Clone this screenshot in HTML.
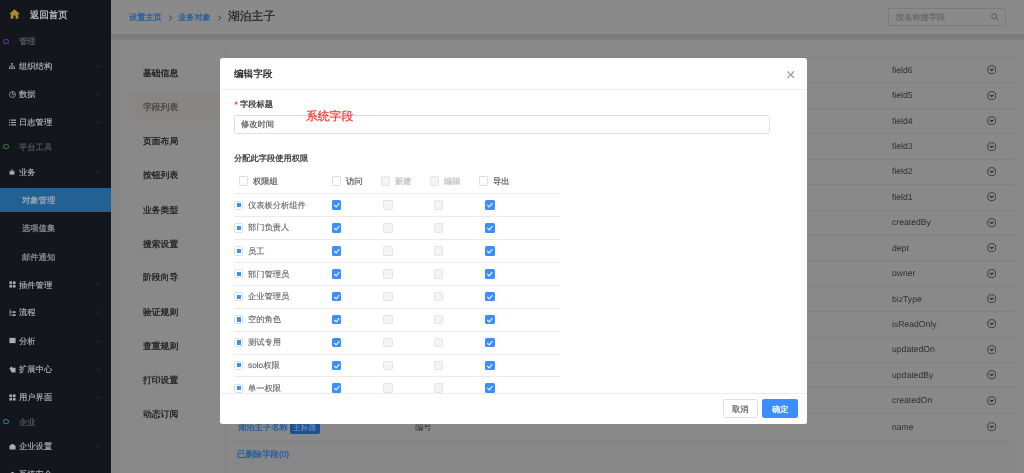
<!DOCTYPE html><html><head><meta charset="utf-8"><style>
*{box-sizing:border-box;margin:0;padding:0}
html,body{width:1024px;height:473px;overflow:hidden}
body{position:relative;background:#868686;font-family:"Liberation Sans", sans-serif;text-rendering:geometricPrecision}
svg{display:block}
.ab{position:absolute}
.t{position:absolute;white-space:nowrap;line-height:1;will-change:transform}
.m{-webkit-text-stroke:0.25px currentColor}
.m2{-webkit-text-stroke:0.3px currentColor}
</style></head><body>

<div class="ab" style="left:0.00px;top:0.00px;width:111.00px;height:473.00px;background:#13161d"></div>
<svg class="ab" style="left:9.3px;top:9.3px" width="11" height="10" viewBox="0 0 11 10"><path d="M5.5 0.3 L10.8 5 L9.3 5 L9.3 9.8 L6.6 9.8 L6.6 6.6 L4.4 6.6 L4.4 9.8 L1.7 9.8 L1.7 5 L0.2 5 Z" fill="#a98b2c"/></svg>
<div class="t" style="left:29.72px;top:10.19px;font-size:9.4px;color:#bfc1c4;font-weight:400;-webkit-text-stroke:0.28px #bfc1c4">返回首页</div>
<div class="ab" style="left:3.2px;top:38.6px;width:5.6px;height:5.4px;border:1.1px solid #67309a;border-radius:50%"></div>
<div class="t" style="left:18.75px;top:37.32px;font-size:8.3px;color:#50545b;font-weight:400;-webkit-text-stroke:0.3px #50545b">管理</div>
<div class="ab" style="left:3.2px;top:144.1px;width:5.6px;height:5.4px;border:1.1px solid #2a7a2a;border-radius:50%"></div>
<div class="t" style="left:18.75px;top:142.82px;font-size:8.3px;color:#50545b;font-weight:400;-webkit-text-stroke:0.3px #50545b">平台工具</div>
<div class="ab" style="left:3.2px;top:418.9px;width:5.6px;height:5.4px;border:1.1px solid #1a7f92;border-radius:50%"></div>
<div class="t" style="left:18.75px;top:417.62px;font-size:8.3px;color:#50545b;font-weight:400;-webkit-text-stroke:0.3px #50545b">企业</div>
<div class="ab" style="left:9.3px;top:63.1px;width:6.2px;height:6.2px"><svg width="6.2" height="6.2" viewBox="0 0 8 8"><rect x="3" y="0" width="2" height="2" fill="#a9acb1"/><path d="M4 2 V4 M1 4 H7 M1 4 V6 M4 4 V6 M7 4 V6" stroke="#a9acb1" stroke-width="0.8" fill="none"/><rect x="0" y="5.8" width="2" height="2" fill="#a9acb1"/><rect x="3" y="5.8" width="2" height="2" fill="#a9acb1"/><rect x="6" y="5.8" width="2" height="2" fill="#a9acb1"/></svg></div>
<div class="t" style="left:19.05px;top:61.92px;font-size:8.3px;color:#aeb1b6;font-weight:400;-webkit-text-stroke:0.15px #aeb1b6">组织结构</div>
<svg class="ab" style="left:96px;top:64.7px" width="5" height="3" viewBox="0 0 5 3"><path d="M0.3 0.3 L2.5 2.5 L4.7 0.3" stroke="#30343b" stroke-width="0.8" fill="none"/></svg>
<div class="ab" style="left:8.9px;top:90.7px;width:7.0px;height:7.0px"><svg width="7.0" height="7.0" viewBox="0 0 8 8"><circle cx="4" cy="4" r="3.4" stroke="#a9acb1" stroke-width="0.9" fill="none"/><path d="M4 1.5 V4 H6.3" stroke="#a9acb1" stroke-width="0.9" fill="none"/></svg></div>
<div class="t" style="left:19.05px;top:90.22px;font-size:8.3px;color:#aeb1b6;font-weight:400;-webkit-text-stroke:0.15px #aeb1b6">数据</div>
<svg class="ab" style="left:96px;top:93.0px" width="5" height="3" viewBox="0 0 5 3"><path d="M0.3 0.3 L2.5 2.5 L4.7 0.3" stroke="#30343b" stroke-width="0.8" fill="none"/></svg>
<div class="ab" style="left:8.9px;top:118.5px;width:7.0px;height:7.0px"><svg width="7.0" height="7.0" viewBox="0 0 8 8"><path d="M0 1.3 H1.3 M2.3 1.3 H8 M0 4 H1.3 M2.3 4 H8 M0 6.7 H1.3 M2.3 6.7 H8" stroke="#a9acb1" stroke-width="1.2"/></svg></div>
<div class="t" style="left:19.05px;top:118.02px;font-size:8.3px;color:#aeb1b6;font-weight:400;-webkit-text-stroke:0.15px #aeb1b6">日志管理</div>
<svg class="ab" style="left:96px;top:120.8px" width="5" height="3" viewBox="0 0 5 3"><path d="M0.3 0.3 L2.5 2.5 L4.7 0.3" stroke="#30343b" stroke-width="0.8" fill="none"/></svg>
<div class="ab" style="left:9.3px;top:169.3px;width:6.0px;height:6.0px"><svg width="6.0" height="6.0" viewBox="0 0 8 8"><path d="M0.8 2.8 H7.2 V7.5 H0.8 Z" fill="#a9acb1"/><path d="M2.8 2.8 V1.2 H5.2 V2.8" stroke="#a9acb1" stroke-width="0.9" fill="none"/></svg></div>
<div class="t" style="left:19.05px;top:168.02px;font-size:8.3px;color:#aeb1b6;font-weight:400;-webkit-text-stroke:0.15px #aeb1b6">业务</div>
<svg class="ab" style="left:96px;top:170.4px" width="5" height="3" viewBox="0 0 5 3"><path d="M0.3 2.7 L2.5 0.5 L4.7 2.7" stroke="#30343b" stroke-width="0.8" fill="none"/></svg>
<div class="ab" style="left:0.00px;top:188.00px;width:111.00px;height:23.70px;background:#236193"></div>
<div class="t" style="left:22.15px;top:195.72px;font-size:8.3px;color:#9ea6ae;font-weight:700;">对象管理</div>
<div class="t m" style="left:22.15px;top:223.82px;font-size:8.3px;color:#8a8e93;font-weight:400;">选项值集</div>
<div class="t m" style="left:22.15px;top:252.52px;font-size:8.3px;color:#8a8e93;font-weight:400;">邮件通知</div>
<div class="ab" style="left:8.9px;top:281.0px;width:7.0px;height:7.0px"><svg width="7.0" height="7.0" viewBox="0 0 8 8"><rect x="0.5" y="0.5" width="3" height="3" fill="#a9acb1"/><rect x="4.5" y="0.5" width="3" height="3" fill="#a9acb1"/><rect x="0.5" y="4.5" width="3" height="3" fill="#a9acb1"/><rect x="4.5" y="4.5" width="3" height="3" fill="#a9acb1"/></svg></div>
<div class="t" style="left:19.05px;top:280.52px;font-size:8.3px;color:#aeb1b6;font-weight:400;-webkit-text-stroke:0.15px #aeb1b6">插件管理</div>
<svg class="ab" style="left:96px;top:283.3px" width="5" height="3" viewBox="0 0 5 3"><path d="M0.3 0.3 L2.5 2.5 L4.7 0.3" stroke="#30343b" stroke-width="0.8" fill="none"/></svg>
<div class="ab" style="left:8.9px;top:308.9px;width:7.0px;height:7.0px"><svg width="7.0" height="7.0" viewBox="0 0 8 8"><path d="M1.2 0.5 V7 H3.5 M1.2 3.5 H3.5" stroke="#a9acb1" stroke-width="0.9" fill="none"/><rect x="4" y="2.5" width="3.5" height="2" fill="#a9acb1"/><rect x="4" y="6" width="3.5" height="2" fill="#a9acb1"/></svg></div>
<div class="t" style="left:19.05px;top:308.42px;font-size:8.3px;color:#aeb1b6;font-weight:400;-webkit-text-stroke:0.15px #aeb1b6">流程</div>
<svg class="ab" style="left:96px;top:311.2px" width="5" height="3" viewBox="0 0 5 3"><path d="M0.3 0.3 L2.5 2.5 L4.7 0.3" stroke="#30343b" stroke-width="0.8" fill="none"/></svg>
<div class="ab" style="left:8.9px;top:337.2px;width:7.0px;height:7.0px"><svg width="7.0" height="7.0" viewBox="0 0 8 8"><rect x="0.5" y="1" width="7" height="6" fill="#a9acb1"/></svg></div>
<div class="t" style="left:19.05px;top:336.72px;font-size:8.3px;color:#aeb1b6;font-weight:400;-webkit-text-stroke:0.15px #aeb1b6">分析</div>
<svg class="ab" style="left:96px;top:339.5px" width="5" height="3" viewBox="0 0 5 3"><path d="M0.3 0.3 L2.5 2.5 L4.7 0.3" stroke="#30343b" stroke-width="0.8" fill="none"/></svg>
<div class="ab" style="left:8.9px;top:365.5px;width:7.0px;height:7.0px"><svg width="7.0" height="7.0" viewBox="0 0 8 8"><path d="M0.5 2.5 L3 0.5 L4 2 L7.5 2 L7.5 7.5 L3 7.5 Z" fill="#a9acb1"/></svg></div>
<div class="t" style="left:19.05px;top:365.02px;font-size:8.3px;color:#aeb1b6;font-weight:400;-webkit-text-stroke:0.15px #aeb1b6">扩展中心</div>
<svg class="ab" style="left:96px;top:367.8px" width="5" height="3" viewBox="0 0 5 3"><path d="M0.3 0.3 L2.5 2.5 L4.7 0.3" stroke="#30343b" stroke-width="0.8" fill="none"/></svg>
<div class="ab" style="left:8.9px;top:393.5px;width:7.0px;height:7.0px"><svg width="7.0" height="7.0" viewBox="0 0 8 8"><rect x="0.5" y="0.5" width="3" height="3" fill="#a9acb1"/><rect x="4.5" y="0.5" width="3" height="3" fill="#a9acb1"/><rect x="0.5" y="4.5" width="3" height="3" fill="#a9acb1"/><rect x="4.5" y="4.5" width="3" height="3" fill="#a9acb1"/></svg></div>
<div class="t" style="left:19.05px;top:393.02px;font-size:8.3px;color:#aeb1b6;font-weight:400;-webkit-text-stroke:0.15px #aeb1b6">用户界面</div>
<svg class="ab" style="left:96px;top:395.8px" width="5" height="3" viewBox="0 0 5 3"><path d="M0.3 0.3 L2.5 2.5 L4.7 0.3" stroke="#30343b" stroke-width="0.8" fill="none"/></svg>
<div class="ab" style="left:8.9px;top:442.7px;width:7.0px;height:7.0px"><svg width="7.0" height="7.0" viewBox="0 0 8 8"><path d="M0.5 7.5 V3 L4 0.8 L7.5 3 V7.5 Z" fill="#a9acb1"/></svg></div>
<div class="t" style="left:19.05px;top:442.22px;font-size:8.3px;color:#aeb1b6;font-weight:400;-webkit-text-stroke:0.15px #aeb1b6">企业设置</div>
<svg class="ab" style="left:96px;top:445.0px" width="5" height="3" viewBox="0 0 5 3"><path d="M0.3 0.3 L2.5 2.5 L4.7 0.3" stroke="#30343b" stroke-width="0.8" fill="none"/></svg>
<div class="ab" style="left:8.9px;top:470.5px;width:7.0px;height:7.0px"><svg width="7.0" height="7.0" viewBox="0 0 8 8"><path d="M0.5 7.5 V3 L4 0.8 L7.5 3 V7.5 Z" fill="#a9acb1"/></svg></div>
<div class="t" style="left:19.05px;top:470.02px;font-size:8.3px;color:#aeb1b6;font-weight:400;-webkit-text-stroke:0.15px #aeb1b6">系统安全</div>
<svg class="ab" style="left:96px;top:472.8px" width="5" height="3" viewBox="0 0 5 3"><path d="M0.3 0.3 L2.5 2.5 L4.7 0.3" stroke="#30343b" stroke-width="0.8" fill="none"/></svg>
<div class="ab" style="left:111.00px;top:0.00px;width:913.00px;height:34.40px;background:#8a8a8a"></div>
<div class="ab" style="left:111.00px;top:34.40px;width:913.00px;height:5.60px;background:linear-gradient(#797979,#808080)"></div>
<div class="t m" style="left:129.15px;top:14.26px;font-size:8.2px;color:#1f5c9c;font-weight:400;">设置主页</div>
<svg class="ab" style="left:167.8px;top:14.6px" width="5" height="6.2" viewBox="0 0 5 6.2"><path d="M0.8 0.4 L3.9 3.1 L0.8 5.8" stroke="#404040" stroke-width="0.9" fill="none"/></svg>
<div class="t m" style="left:178.25px;top:14.26px;font-size:8.2px;color:#1f5c9c;font-weight:400;">业务对象</div>
<svg class="ab" style="left:217.1px;top:14.6px" width="5" height="6.2" viewBox="0 0 5 6.2"><path d="M0.8 0.4 L3.9 3.1 L0.8 5.8" stroke="#404040" stroke-width="0.9" fill="none"/></svg>
<div class="t m" style="left:227.65px;top:10.54px;font-size:11.8px;color:#262626;font-weight:400;">湖泊主子</div>
<div class="ab" style="left:888.30px;top:8.30px;width:117.50px;height:17.30px;border:0.8px solid #7b7b7b;border-radius:2px"></div>
<div class="t m" style="left:895.65px;top:14.16px;font-size:8.2px;color:#6a6a6a;font-weight:400;">按名称搜字段</div>
<svg class="ab" style="left:990.8px;top:13.4px" width="8" height="8" viewBox="0 0 8 8"><circle cx="3.2" cy="3.2" r="2.5" stroke="#555555" stroke-width="0.9" fill="none"/><path d="M5.1 5.1 L7.4 7.4" stroke="#555555" stroke-width="1"/></svg>
<div class="ab" style="left:120.50px;top:40.00px;width:903.50px;height:433.00px;background:#898989"></div>
<div class="ab" style="left:128.60px;top:92.00px;width:97.00px;height:28.10px;background:#898583"></div>
<div class="ab" style="left:225.40px;top:49.80px;width:0.80px;height:423.20px;background:#828282"></div>
<div class="t" style="left:143.24px;top:69.48px;font-size:8.8px;color:#1a1a1a;font-weight:700;">基础信息</div>
<div class="t m" style="left:143.24px;top:102.63px;font-size:8.8px;color:#444444;font-weight:400;">字段列表</div>
<div class="t m" style="left:143.24px;top:136.78px;font-size:8.8px;color:#1a1a1a;font-weight:400;-webkit-text-stroke:0.25px #1a1a1a">页面布局</div>
<div class="t m" style="left:143.24px;top:170.93px;font-size:8.8px;color:#1a1a1a;font-weight:400;-webkit-text-stroke:0.25px #1a1a1a">按钮列表</div>
<div class="t m" style="left:143.24px;top:206.08px;font-size:8.8px;color:#1a1a1a;font-weight:400;-webkit-text-stroke:0.25px #1a1a1a">业务类型</div>
<div class="t m" style="left:143.24px;top:240.23px;font-size:8.8px;color:#1a1a1a;font-weight:400;-webkit-text-stroke:0.25px #1a1a1a">搜索设置</div>
<div class="t m" style="left:143.24px;top:273.38px;font-size:8.8px;color:#1a1a1a;font-weight:400;-webkit-text-stroke:0.25px #1a1a1a">阶段向导</div>
<div class="t m" style="left:143.24px;top:307.53px;font-size:8.8px;color:#1a1a1a;font-weight:400;-webkit-text-stroke:0.25px #1a1a1a">验证规则</div>
<div class="t m" style="left:143.24px;top:341.68px;font-size:8.8px;color:#1a1a1a;font-weight:400;-webkit-text-stroke:0.25px #1a1a1a">查重规则</div>
<div class="t m" style="left:143.24px;top:375.83px;font-size:8.8px;color:#1a1a1a;font-weight:400;-webkit-text-stroke:0.25px #1a1a1a">打印设置</div>
<div class="t m" style="left:143.24px;top:409.98px;font-size:8.8px;color:#1a1a1a;font-weight:400;-webkit-text-stroke:0.25px #1a1a1a">动态订阅</div>
<div class="ab" style="left:232.00px;top:57.00px;width:783.00px;height:0.80px;background:#818181"></div>
<div class="ab" style="left:232.00px;top:82.42px;width:783.00px;height:0.80px;background:#818181"></div>
<div class="ab" style="left:232.00px;top:107.84px;width:783.00px;height:0.80px;background:#818181"></div>
<div class="ab" style="left:232.00px;top:133.26px;width:783.00px;height:0.80px;background:#818181"></div>
<div class="ab" style="left:232.00px;top:158.68px;width:783.00px;height:0.80px;background:#818181"></div>
<div class="ab" style="left:232.00px;top:184.10px;width:783.00px;height:0.80px;background:#818181"></div>
<div class="ab" style="left:232.00px;top:209.52px;width:783.00px;height:0.80px;background:#818181"></div>
<div class="ab" style="left:232.00px;top:234.94px;width:783.00px;height:0.80px;background:#818181"></div>
<div class="ab" style="left:232.00px;top:260.36px;width:783.00px;height:0.80px;background:#818181"></div>
<div class="ab" style="left:232.00px;top:285.78px;width:783.00px;height:0.80px;background:#818181"></div>
<div class="ab" style="left:232.00px;top:311.20px;width:783.00px;height:0.80px;background:#818181"></div>
<div class="ab" style="left:232.00px;top:336.62px;width:783.00px;height:0.80px;background:#818181"></div>
<div class="ab" style="left:232.00px;top:362.04px;width:783.00px;height:0.80px;background:#818181"></div>
<div class="ab" style="left:232.00px;top:387.46px;width:783.00px;height:0.80px;background:#818181"></div>
<div class="ab" style="left:232.00px;top:412.88px;width:783.00px;height:0.80px;background:#818181"></div>
<div class="ab" style="left:232.00px;top:440.00px;width:783.00px;height:0.80px;background:#818181"></div>
<div class="t" style="left:891.54px;top:65.75px;font-size:8.65px;color:#303030;font-weight:400;">field6</div>
<svg class="ab" style="left:986.8px;top:65.2px" width="9.4" height="9.4" viewBox="0 0 10 10"><circle cx="5" cy="5" r="4.3" stroke="#3a3a3a" stroke-width="1.05" fill="none"/><path d="M3.1 4.0 L5 5.9 L6.9 4.0" stroke="#3a3a3a" stroke-width="1.35" fill="none"/></svg>
<div class="t" style="left:891.54px;top:91.17px;font-size:8.65px;color:#303030;font-weight:400;">field5</div>
<svg class="ab" style="left:986.8px;top:90.6px" width="9.4" height="9.4" viewBox="0 0 10 10"><circle cx="5" cy="5" r="4.3" stroke="#3a3a3a" stroke-width="1.05" fill="none"/><path d="M3.1 4.0 L5 5.9 L6.9 4.0" stroke="#3a3a3a" stroke-width="1.35" fill="none"/></svg>
<div class="t" style="left:891.54px;top:116.59px;font-size:8.65px;color:#303030;font-weight:400;">field4</div>
<svg class="ab" style="left:986.8px;top:116.0px" width="9.4" height="9.4" viewBox="0 0 10 10"><circle cx="5" cy="5" r="4.3" stroke="#3a3a3a" stroke-width="1.05" fill="none"/><path d="M3.1 4.0 L5 5.9 L6.9 4.0" stroke="#3a3a3a" stroke-width="1.35" fill="none"/></svg>
<div class="t" style="left:891.54px;top:142.01px;font-size:8.65px;color:#303030;font-weight:400;">field3</div>
<svg class="ab" style="left:986.8px;top:141.5px" width="9.4" height="9.4" viewBox="0 0 10 10"><circle cx="5" cy="5" r="4.3" stroke="#3a3a3a" stroke-width="1.05" fill="none"/><path d="M3.1 4.0 L5 5.9 L6.9 4.0" stroke="#3a3a3a" stroke-width="1.35" fill="none"/></svg>
<div class="t" style="left:891.54px;top:167.43px;font-size:8.65px;color:#303030;font-weight:400;">field2</div>
<svg class="ab" style="left:986.8px;top:166.9px" width="9.4" height="9.4" viewBox="0 0 10 10"><circle cx="5" cy="5" r="4.3" stroke="#3a3a3a" stroke-width="1.05" fill="none"/><path d="M3.1 4.0 L5 5.9 L6.9 4.0" stroke="#3a3a3a" stroke-width="1.35" fill="none"/></svg>
<div class="t" style="left:891.54px;top:192.85px;font-size:8.65px;color:#303030;font-weight:400;">field1</div>
<svg class="ab" style="left:986.8px;top:192.3px" width="9.4" height="9.4" viewBox="0 0 10 10"><circle cx="5" cy="5" r="4.3" stroke="#3a3a3a" stroke-width="1.05" fill="none"/><path d="M3.1 4.0 L5 5.9 L6.9 4.0" stroke="#3a3a3a" stroke-width="1.35" fill="none"/></svg>
<div class="t" style="left:891.54px;top:218.27px;font-size:8.65px;color:#303030;font-weight:400;">createdBy</div>
<svg class="ab" style="left:986.8px;top:217.7px" width="9.4" height="9.4" viewBox="0 0 10 10"><circle cx="5" cy="5" r="4.3" stroke="#3a3a3a" stroke-width="1.05" fill="none"/><path d="M3.1 4.0 L5 5.9 L6.9 4.0" stroke="#3a3a3a" stroke-width="1.35" fill="none"/></svg>
<div class="t" style="left:891.54px;top:243.69px;font-size:8.65px;color:#303030;font-weight:400;">dept</div>
<svg class="ab" style="left:986.8px;top:243.1px" width="9.4" height="9.4" viewBox="0 0 10 10"><circle cx="5" cy="5" r="4.3" stroke="#3a3a3a" stroke-width="1.05" fill="none"/><path d="M3.1 4.0 L5 5.9 L6.9 4.0" stroke="#3a3a3a" stroke-width="1.35" fill="none"/></svg>
<div class="t" style="left:891.54px;top:269.11px;font-size:8.65px;color:#303030;font-weight:400;">owner</div>
<svg class="ab" style="left:986.8px;top:268.6px" width="9.4" height="9.4" viewBox="0 0 10 10"><circle cx="5" cy="5" r="4.3" stroke="#3a3a3a" stroke-width="1.05" fill="none"/><path d="M3.1 4.0 L5 5.9 L6.9 4.0" stroke="#3a3a3a" stroke-width="1.35" fill="none"/></svg>
<div class="t" style="left:891.54px;top:294.53px;font-size:8.65px;color:#303030;font-weight:400;">bizType</div>
<svg class="ab" style="left:986.8px;top:294.0px" width="9.4" height="9.4" viewBox="0 0 10 10"><circle cx="5" cy="5" r="4.3" stroke="#3a3a3a" stroke-width="1.05" fill="none"/><path d="M3.1 4.0 L5 5.9 L6.9 4.0" stroke="#3a3a3a" stroke-width="1.35" fill="none"/></svg>
<div class="t" style="left:891.54px;top:319.95px;font-size:8.65px;color:#303030;font-weight:400;">isReadOnly</div>
<svg class="ab" style="left:986.8px;top:319.4px" width="9.4" height="9.4" viewBox="0 0 10 10"><circle cx="5" cy="5" r="4.3" stroke="#3a3a3a" stroke-width="1.05" fill="none"/><path d="M3.1 4.0 L5 5.9 L6.9 4.0" stroke="#3a3a3a" stroke-width="1.35" fill="none"/></svg>
<div class="t" style="left:891.54px;top:345.37px;font-size:8.65px;color:#303030;font-weight:400;">updatedOn</div>
<svg class="ab" style="left:986.8px;top:344.8px" width="9.4" height="9.4" viewBox="0 0 10 10"><circle cx="5" cy="5" r="4.3" stroke="#3a3a3a" stroke-width="1.05" fill="none"/><path d="M3.1 4.0 L5 5.9 L6.9 4.0" stroke="#3a3a3a" stroke-width="1.35" fill="none"/></svg>
<div class="t" style="left:891.54px;top:370.79px;font-size:8.65px;color:#303030;font-weight:400;">updatedBy</div>
<svg class="ab" style="left:986.8px;top:370.2px" width="9.4" height="9.4" viewBox="0 0 10 10"><circle cx="5" cy="5" r="4.3" stroke="#3a3a3a" stroke-width="1.05" fill="none"/><path d="M3.1 4.0 L5 5.9 L6.9 4.0" stroke="#3a3a3a" stroke-width="1.35" fill="none"/></svg>
<div class="t" style="left:891.54px;top:396.21px;font-size:8.65px;color:#303030;font-weight:400;">createdOn</div>
<svg class="ab" style="left:986.8px;top:395.7px" width="9.4" height="9.4" viewBox="0 0 10 10"><circle cx="5" cy="5" r="4.3" stroke="#3a3a3a" stroke-width="1.05" fill="none"/><path d="M3.1 4.0 L5 5.9 L6.9 4.0" stroke="#3a3a3a" stroke-width="1.35" fill="none"/></svg>
<div class="t" style="left:891.54px;top:422.75px;font-size:8.65px;color:#303030;font-weight:400;">name</div>
<svg class="ab" style="left:986.8px;top:422.2px" width="9.4" height="9.4" viewBox="0 0 10 10"><circle cx="5" cy="5" r="4.3" stroke="#3a3a3a" stroke-width="1.05" fill="none"/><path d="M3.1 4.0 L5 5.9 L6.9 4.0" stroke="#3a3a3a" stroke-width="1.35" fill="none"/></svg>
<div class="t m" style="left:238.45px;top:422.62px;font-size:8.3px;color:#1f5c9c;font-weight:400;">湖泊主子名称</div>
<div class="ab" style="left:289.70px;top:422.20px;width:30.30px;height:11.60px;background:#1d5193;border-radius:2px"></div>
<div class="t" style="left:292.97px;top:423.66px;font-size:7.8px;color:#7d9bc6;font-weight:400;">主标题</div>
<div class="t" style="left:414.75px;top:423.32px;font-size:8.3px;color:#2e2e2e;font-weight:400;">编号</div>
<div class="ab" style="left:232.80px;top:440.60px;width:782.20px;height:27.40px;background:#878787"></div>
<div class="t m" style="left:236.95px;top:450.17px;font-size:8.4px;color:#1f5c9c;font-weight:400;">已删除字段(0)</div>
<div class="ab" style="left:220.3px;top:58.0px;width:587.2px;height:365.8px;background:#fff;border-radius:2.5px;overflow:hidden">
<div class="t" style="left:13.41px;top:11.79px;font-size:9.6px;color:#303133;font-weight:700;">编辑字段</div>
<svg class="ab" style="left:567.1px;top:12.6px" width="7.4" height="7.4" viewBox="0 0 8 8"><path d="M0.4 0.4 L7.6 7.6 M7.6 0.4 L0.4 7.6" stroke="#85888d" stroke-width="1.1"/></svg>
<div class="ab" style="left:0.00px;top:31.10px;width:587.20px;height:0.90px;background:#ececec"></div>
<svg class="ab" style="left:14.0px;top:43.2px" width="4.4" height="4.2" viewBox="0 0 10 10"><path d="M5 0 L6.2 3.5 L10 3.6 L7 5.9 L8.1 9.6 L5 7.4 L1.9 9.6 L3 5.9 L0 3.6 L3.8 3.5 Z" fill="#f5402e"/></svg>
<div class="t m" style="left:20.15px;top:43.34px;font-size:8.25px;color:#303133;font-weight:400;">字段标题</div>
<div class="ab" style="left:14.10px;top:57.00px;width:535.60px;height:18.60px;border:0.8px solid #dedede;border-radius:2.5px"></div>
<div class="t m" style="left:20.95px;top:63.24px;font-size:8.25px;color:#606266;font-weight:400;">修改时间</div>
<div class="t m" style="left:86.15px;top:52.94px;font-size:11.8px;color:#ef4036;font-weight:400;">系统字段</div>
<div class="t m" style="left:13.75px;top:96.64px;font-size:8.25px;color:#303133;font-weight:400;">分配此字段使用权限</div>
<div class="ab" style="left:18.30px;top:118.30px;width:9.50px;height:9.50px;border:0.8px solid #d9dce2;border-radius:1.5px;background:#fff"></div>
<div class="t m" style="left:32.35px;top:120.04px;font-size:8.25px;color:#606266;font-weight:400;">权限组</div>
<div class="ab" style="left:111.60px;top:118.30px;width:9.50px;height:9.50px;border:0.8px solid #d9dce2;border-radius:1.5px;background:#fff"></div>
<div class="t m" style="left:125.55px;top:120.04px;font-size:8.25px;color:#606266;font-weight:400;">访问</div>
<div class="ab" style="left:160.70px;top:118.30px;width:9.50px;height:9.50px;border:0.8px solid #e3e4e7;border-radius:1.5px;background:#f3f4f6"></div>
<div class="t m" style="left:174.55px;top:120.04px;font-size:8.25px;color:#c0c4cc;font-weight:400;">新建</div>
<div class="ab" style="left:209.40px;top:118.30px;width:9.50px;height:9.50px;border:0.8px solid #e3e4e7;border-radius:1.5px;background:#f3f4f6"></div>
<div class="t m" style="left:223.45px;top:120.04px;font-size:8.25px;color:#c0c4cc;font-weight:400;">编辑</div>
<div class="ab" style="left:258.40px;top:118.30px;width:9.50px;height:9.50px;border:0.8px solid #d9dce2;border-radius:1.5px;background:#fff"></div>
<div class="t m" style="left:272.25px;top:120.04px;font-size:8.25px;color:#606266;font-weight:400;">导出</div>
<div class="ab" style="left:13.70px;top:135.30px;width:326.50px;height:0.80px;background:#ebebeb"></div>
<div class="ab" style="left:0;top:136.10px;width:587px;height:198.60px;overflow:hidden">
<div class="ab" style="left:14.00px;top:6.50px;width:9.20px;height:9.20px;border:0.8px solid #dcdde0;border-radius:1.5px;background:#fff"></div>
<div class="ab" style="left:16.50px;top:9.00px;width:4.20px;height:4.20px;background:#3a8ffd"></div>
<div class="t" style="left:28.15px;top:8.14px;font-size:8.25px;color:#606266;font-weight:400;-webkit-text-stroke:0.12px #606266">仪表板分析组件</div>
<div class="ab" style="left:111.60px;top:6.35px;width:9.50px;height:9.50px;background:#3a8ffd;border-radius:1.5px"></div>
<svg class="ab" style="left:111.60px;top:6.35px" width="9.5" height="9.5" viewBox="0 0 10 10"><path d="M2.4 5.3 L4.4 7.2 L7.8 3.3" stroke="#eef5ff" stroke-width="1.2" fill="none"/></svg>
<div class="ab" style="left:162.90px;top:6.35px;width:9.50px;height:9.50px;border:0.8px solid #e3e4e7;border-radius:1.5px;background:#f3f4f6"></div>
<div class="ab" style="left:213.70px;top:6.35px;width:9.50px;height:9.50px;border:0.8px solid #e3e4e7;border-radius:1.5px;background:#f3f4f6"></div>
<div class="ab" style="left:264.80px;top:6.35px;width:9.50px;height:9.50px;background:#3a8ffd;border-radius:1.5px"></div>
<svg class="ab" style="left:264.80px;top:6.35px" width="9.5" height="9.5" viewBox="0 0 10 10"><path d="M2.4 5.3 L4.4 7.2 L7.8 3.3" stroke="#eef5ff" stroke-width="1.2" fill="none"/></svg>
<div class="ab" style="left:13.70px;top:22.30px;width:326.50px;height:0.80px;background:#ebebeb"></div>
<div class="ab" style="left:14.00px;top:29.37px;width:9.20px;height:9.20px;border:0.8px solid #dcdde0;border-radius:1.5px;background:#fff"></div>
<div class="ab" style="left:16.50px;top:31.87px;width:4.20px;height:4.20px;background:#3a8ffd"></div>
<div class="t" style="left:28.15px;top:30.01px;font-size:8.25px;color:#606266;font-weight:400;-webkit-text-stroke:0.12px #606266">部门负责人</div>
<div class="ab" style="left:111.60px;top:29.22px;width:9.50px;height:9.50px;background:#3a8ffd;border-radius:1.5px"></div>
<svg class="ab" style="left:111.60px;top:29.22px" width="9.5" height="9.5" viewBox="0 0 10 10"><path d="M2.4 5.3 L4.4 7.2 L7.8 3.3" stroke="#eef5ff" stroke-width="1.2" fill="none"/></svg>
<div class="ab" style="left:162.90px;top:29.22px;width:9.50px;height:9.50px;border:0.8px solid #e3e4e7;border-radius:1.5px;background:#f3f4f6"></div>
<div class="ab" style="left:213.70px;top:29.22px;width:9.50px;height:9.50px;border:0.8px solid #e3e4e7;border-radius:1.5px;background:#f3f4f6"></div>
<div class="ab" style="left:264.80px;top:29.22px;width:9.50px;height:9.50px;background:#3a8ffd;border-radius:1.5px"></div>
<svg class="ab" style="left:264.80px;top:29.22px" width="9.5" height="9.5" viewBox="0 0 10 10"><path d="M2.4 5.3 L4.4 7.2 L7.8 3.3" stroke="#eef5ff" stroke-width="1.2" fill="none"/></svg>
<div class="ab" style="left:13.70px;top:45.17px;width:326.50px;height:0.80px;background:#ebebeb"></div>
<div class="ab" style="left:14.00px;top:52.24px;width:9.20px;height:9.20px;border:0.8px solid #dcdde0;border-radius:1.5px;background:#fff"></div>
<div class="ab" style="left:16.50px;top:54.74px;width:4.20px;height:4.20px;background:#3a8ffd"></div>
<div class="t" style="left:28.15px;top:53.88px;font-size:8.25px;color:#606266;font-weight:400;-webkit-text-stroke:0.12px #606266">员工</div>
<div class="ab" style="left:111.60px;top:52.09px;width:9.50px;height:9.50px;background:#3a8ffd;border-radius:1.5px"></div>
<svg class="ab" style="left:111.60px;top:52.09px" width="9.5" height="9.5" viewBox="0 0 10 10"><path d="M2.4 5.3 L4.4 7.2 L7.8 3.3" stroke="#eef5ff" stroke-width="1.2" fill="none"/></svg>
<div class="ab" style="left:162.90px;top:52.09px;width:9.50px;height:9.50px;border:0.8px solid #e3e4e7;border-radius:1.5px;background:#f3f4f6"></div>
<div class="ab" style="left:213.70px;top:52.09px;width:9.50px;height:9.50px;border:0.8px solid #e3e4e7;border-radius:1.5px;background:#f3f4f6"></div>
<div class="ab" style="left:264.80px;top:52.09px;width:9.50px;height:9.50px;background:#3a8ffd;border-radius:1.5px"></div>
<svg class="ab" style="left:264.80px;top:52.09px" width="9.5" height="9.5" viewBox="0 0 10 10"><path d="M2.4 5.3 L4.4 7.2 L7.8 3.3" stroke="#eef5ff" stroke-width="1.2" fill="none"/></svg>
<div class="ab" style="left:13.70px;top:68.04px;width:326.50px;height:0.80px;background:#ebebeb"></div>
<div class="ab" style="left:14.00px;top:75.11px;width:9.20px;height:9.20px;border:0.8px solid #dcdde0;border-radius:1.5px;background:#fff"></div>
<div class="ab" style="left:16.50px;top:77.61px;width:4.20px;height:4.20px;background:#3a8ffd"></div>
<div class="t" style="left:28.15px;top:76.75px;font-size:8.25px;color:#606266;font-weight:400;-webkit-text-stroke:0.12px #606266">部门管理员</div>
<div class="ab" style="left:111.60px;top:74.96px;width:9.50px;height:9.50px;background:#3a8ffd;border-radius:1.5px"></div>
<svg class="ab" style="left:111.60px;top:74.96px" width="9.5" height="9.5" viewBox="0 0 10 10"><path d="M2.4 5.3 L4.4 7.2 L7.8 3.3" stroke="#eef5ff" stroke-width="1.2" fill="none"/></svg>
<div class="ab" style="left:162.90px;top:74.96px;width:9.50px;height:9.50px;border:0.8px solid #e3e4e7;border-radius:1.5px;background:#f3f4f6"></div>
<div class="ab" style="left:213.70px;top:74.96px;width:9.50px;height:9.50px;border:0.8px solid #e3e4e7;border-radius:1.5px;background:#f3f4f6"></div>
<div class="ab" style="left:264.80px;top:74.96px;width:9.50px;height:9.50px;background:#3a8ffd;border-radius:1.5px"></div>
<svg class="ab" style="left:264.80px;top:74.96px" width="9.5" height="9.5" viewBox="0 0 10 10"><path d="M2.4 5.3 L4.4 7.2 L7.8 3.3" stroke="#eef5ff" stroke-width="1.2" fill="none"/></svg>
<div class="ab" style="left:13.70px;top:90.91px;width:326.50px;height:0.80px;background:#ebebeb"></div>
<div class="ab" style="left:14.00px;top:97.98px;width:9.20px;height:9.20px;border:0.8px solid #dcdde0;border-radius:1.5px;background:#fff"></div>
<div class="ab" style="left:16.50px;top:100.48px;width:4.20px;height:4.20px;background:#3a8ffd"></div>
<div class="t" style="left:28.15px;top:98.62px;font-size:8.25px;color:#606266;font-weight:400;-webkit-text-stroke:0.12px #606266">企业管理员</div>
<div class="ab" style="left:111.60px;top:97.83px;width:9.50px;height:9.50px;background:#3a8ffd;border-radius:1.5px"></div>
<svg class="ab" style="left:111.60px;top:97.83px" width="9.5" height="9.5" viewBox="0 0 10 10"><path d="M2.4 5.3 L4.4 7.2 L7.8 3.3" stroke="#eef5ff" stroke-width="1.2" fill="none"/></svg>
<div class="ab" style="left:162.90px;top:97.83px;width:9.50px;height:9.50px;border:0.8px solid #e3e4e7;border-radius:1.5px;background:#f3f4f6"></div>
<div class="ab" style="left:213.70px;top:97.83px;width:9.50px;height:9.50px;border:0.8px solid #e3e4e7;border-radius:1.5px;background:#f3f4f6"></div>
<div class="ab" style="left:264.80px;top:97.83px;width:9.50px;height:9.50px;background:#3a8ffd;border-radius:1.5px"></div>
<svg class="ab" style="left:264.80px;top:97.83px" width="9.5" height="9.5" viewBox="0 0 10 10"><path d="M2.4 5.3 L4.4 7.2 L7.8 3.3" stroke="#eef5ff" stroke-width="1.2" fill="none"/></svg>
<div class="ab" style="left:13.70px;top:113.78px;width:326.50px;height:0.80px;background:#ebebeb"></div>
<div class="ab" style="left:14.00px;top:120.85px;width:9.20px;height:9.20px;border:0.8px solid #dcdde0;border-radius:1.5px;background:#fff"></div>
<div class="ab" style="left:16.50px;top:123.35px;width:4.20px;height:4.20px;background:#3a8ffd"></div>
<div class="t" style="left:28.15px;top:121.49px;font-size:8.25px;color:#606266;font-weight:400;-webkit-text-stroke:0.12px #606266">空的角色</div>
<div class="ab" style="left:111.60px;top:120.70px;width:9.50px;height:9.50px;background:#3a8ffd;border-radius:1.5px"></div>
<svg class="ab" style="left:111.60px;top:120.70px" width="9.5" height="9.5" viewBox="0 0 10 10"><path d="M2.4 5.3 L4.4 7.2 L7.8 3.3" stroke="#eef5ff" stroke-width="1.2" fill="none"/></svg>
<div class="ab" style="left:162.90px;top:120.70px;width:9.50px;height:9.50px;border:0.8px solid #e3e4e7;border-radius:1.5px;background:#f3f4f6"></div>
<div class="ab" style="left:213.70px;top:120.70px;width:9.50px;height:9.50px;border:0.8px solid #e3e4e7;border-radius:1.5px;background:#f3f4f6"></div>
<div class="ab" style="left:264.80px;top:120.70px;width:9.50px;height:9.50px;background:#3a8ffd;border-radius:1.5px"></div>
<svg class="ab" style="left:264.80px;top:120.70px" width="9.5" height="9.5" viewBox="0 0 10 10"><path d="M2.4 5.3 L4.4 7.2 L7.8 3.3" stroke="#eef5ff" stroke-width="1.2" fill="none"/></svg>
<div class="ab" style="left:13.70px;top:136.65px;width:326.50px;height:0.80px;background:#ebebeb"></div>
<div class="ab" style="left:14.00px;top:143.72px;width:9.20px;height:9.20px;border:0.8px solid #dcdde0;border-radius:1.5px;background:#fff"></div>
<div class="ab" style="left:16.50px;top:146.22px;width:4.20px;height:4.20px;background:#3a8ffd"></div>
<div class="t" style="left:28.15px;top:145.36px;font-size:8.25px;color:#606266;font-weight:400;-webkit-text-stroke:0.12px #606266">测试专用</div>
<div class="ab" style="left:111.60px;top:143.57px;width:9.50px;height:9.50px;background:#3a8ffd;border-radius:1.5px"></div>
<svg class="ab" style="left:111.60px;top:143.57px" width="9.5" height="9.5" viewBox="0 0 10 10"><path d="M2.4 5.3 L4.4 7.2 L7.8 3.3" stroke="#eef5ff" stroke-width="1.2" fill="none"/></svg>
<div class="ab" style="left:162.90px;top:143.57px;width:9.50px;height:9.50px;border:0.8px solid #e3e4e7;border-radius:1.5px;background:#f3f4f6"></div>
<div class="ab" style="left:213.70px;top:143.57px;width:9.50px;height:9.50px;border:0.8px solid #e3e4e7;border-radius:1.5px;background:#f3f4f6"></div>
<div class="ab" style="left:264.80px;top:143.57px;width:9.50px;height:9.50px;background:#3a8ffd;border-radius:1.5px"></div>
<svg class="ab" style="left:264.80px;top:143.57px" width="9.5" height="9.5" viewBox="0 0 10 10"><path d="M2.4 5.3 L4.4 7.2 L7.8 3.3" stroke="#eef5ff" stroke-width="1.2" fill="none"/></svg>
<div class="ab" style="left:13.70px;top:159.52px;width:326.50px;height:0.80px;background:#ebebeb"></div>
<div class="ab" style="left:14.00px;top:166.59px;width:9.20px;height:9.20px;border:0.8px solid #dcdde0;border-radius:1.5px;background:#fff"></div>
<div class="ab" style="left:16.50px;top:169.09px;width:4.20px;height:4.20px;background:#3a8ffd"></div>
<div class="t" style="left:28.15px;top:168.23px;font-size:8.25px;color:#606266;font-weight:400;-webkit-text-stroke:0.12px #606266">solo权限</div>
<div class="ab" style="left:111.60px;top:166.44px;width:9.50px;height:9.50px;background:#3a8ffd;border-radius:1.5px"></div>
<svg class="ab" style="left:111.60px;top:166.44px" width="9.5" height="9.5" viewBox="0 0 10 10"><path d="M2.4 5.3 L4.4 7.2 L7.8 3.3" stroke="#eef5ff" stroke-width="1.2" fill="none"/></svg>
<div class="ab" style="left:162.90px;top:166.44px;width:9.50px;height:9.50px;border:0.8px solid #e3e4e7;border-radius:1.5px;background:#f3f4f6"></div>
<div class="ab" style="left:213.70px;top:166.44px;width:9.50px;height:9.50px;border:0.8px solid #e3e4e7;border-radius:1.5px;background:#f3f4f6"></div>
<div class="ab" style="left:264.80px;top:166.44px;width:9.50px;height:9.50px;background:#3a8ffd;border-radius:1.5px"></div>
<svg class="ab" style="left:264.80px;top:166.44px" width="9.5" height="9.5" viewBox="0 0 10 10"><path d="M2.4 5.3 L4.4 7.2 L7.8 3.3" stroke="#eef5ff" stroke-width="1.2" fill="none"/></svg>
<div class="ab" style="left:13.70px;top:182.39px;width:326.50px;height:0.80px;background:#ebebeb"></div>
<div class="ab" style="left:14.00px;top:189.46px;width:9.20px;height:9.20px;border:0.8px solid #dcdde0;border-radius:1.5px;background:#fff"></div>
<div class="ab" style="left:16.50px;top:191.96px;width:4.20px;height:4.20px;background:#3a8ffd"></div>
<div class="t" style="left:28.15px;top:191.10px;font-size:8.25px;color:#606266;font-weight:400;-webkit-text-stroke:0.12px #606266">单一权限</div>
<div class="ab" style="left:111.60px;top:189.31px;width:9.50px;height:9.50px;background:#3a8ffd;border-radius:1.5px"></div>
<svg class="ab" style="left:111.60px;top:189.31px" width="9.5" height="9.5" viewBox="0 0 10 10"><path d="M2.4 5.3 L4.4 7.2 L7.8 3.3" stroke="#eef5ff" stroke-width="1.2" fill="none"/></svg>
<div class="ab" style="left:162.90px;top:189.31px;width:9.50px;height:9.50px;border:0.8px solid #e3e4e7;border-radius:1.5px;background:#f3f4f6"></div>
<div class="ab" style="left:213.70px;top:189.31px;width:9.50px;height:9.50px;border:0.8px solid #e3e4e7;border-radius:1.5px;background:#f3f4f6"></div>
<div class="ab" style="left:264.80px;top:189.31px;width:9.50px;height:9.50px;background:#3a8ffd;border-radius:1.5px"></div>
<svg class="ab" style="left:264.80px;top:189.31px" width="9.5" height="9.5" viewBox="0 0 10 10"><path d="M2.4 5.3 L4.4 7.2 L7.8 3.3" stroke="#eef5ff" stroke-width="1.2" fill="none"/></svg>
</div>
<div class="ab" style="left:0.00px;top:334.70px;width:587.20px;height:0.90px;background:#ececec"></div>
<div class="ab" style="left:502.60px;top:341.30px;width:34.80px;height:18.80px;border:0.8px solid #dfdfe1;border-radius:2.5px;background:#fff"></div>
<div class="t m" style="left:511.45px;top:347.84px;font-size:8.25px;color:#606266;font-weight:400;">取消</div>
<div class="ab" style="left:542.20px;top:341.10px;width:35.10px;height:19.00px;background:#3a8ffd;border-radius:2.5px"></div>
<div class="t m" style="left:551.25px;top:347.84px;font-size:8.25px;color:#ffffff;font-weight:400;">确定</div>
</div>
</body></html>
